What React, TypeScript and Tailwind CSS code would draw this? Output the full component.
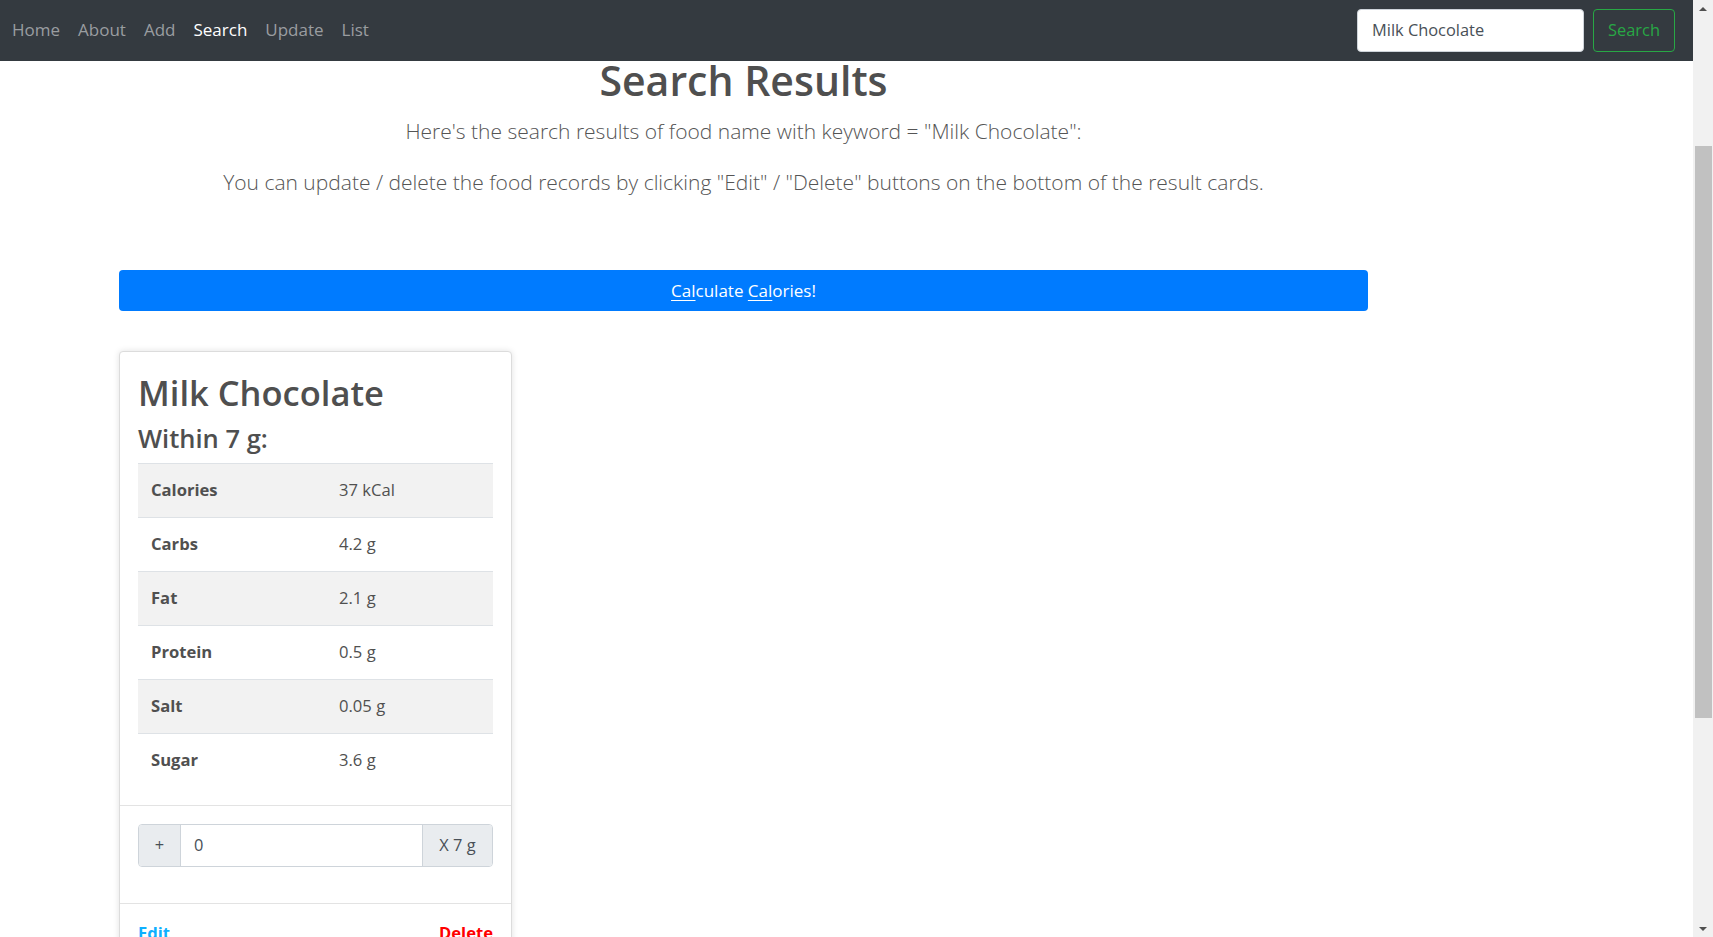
import React from "react";

const rows: { label: string; value: string }[] = [
  { label: "Calories", value: "37 kCal" },
  { label: "Carbs", value: "4.2 g" },
  { label: "Fat", value: "2.1 g" },
  { label: "Protein", value: "0.5 g" },
  { label: "Salt", value: "0.05 g" },
  { label: "Sugar", value: "3.6 g" },
];

export default function App() {
  return (
    <div className="flex h-[937px] w-[1713px] overflow-hidden bg-white font-['Open_Sans','Noto_Sans',sans-serif] text-[#505050]">
      <div className="flex w-[1693px] flex-col">
        {/* Navbar */}
        <nav className="flex h-[61px] shrink-0 items-center justify-between bg-[#343a40] pl-[3px] pr-[18px]">
          <div className="flex items-center pb-[2px] text-[17px]">
            <span className="px-[9px] text-[#9a9da0]">Home</span>
            <span className="px-[9px] text-[#9a9da0]">About</span>
            <span className="px-[9px] text-[#9a9da0]">Add</span>
            <span className="px-[9px] text-white">Search</span>
            <span className="px-[9px] text-[#9a9da0]">Update</span>
            <span className="px-[9px] text-[#9a9da0]">List</span>
          </div>
          <div className="flex items-center gap-[9px]">
            <div className="flex h-[43px] w-[227px] items-center rounded-[4px] border border-[#ced4da] bg-white pl-[14px] text-[16.4px] text-[#495057]">
              Milk Chocolate
            </div>
            <div className="flex h-[43px] w-[82px] items-center justify-center rounded-[4px] border border-[#28a745] text-[16.4px] text-[#28a745]">
              Search
            </div>
          </div>
        </nav>

        {/* Main */}
        <main className="flex flex-col pl-[119px]">
          <div className="flex w-[1249px] flex-col items-center">
            <h1 className="text-[41px] font-semibold leading-[39px] text-[#4f4f4f]">Search Results</h1>
            <p className="mt-[16px] text-[21px] font-light leading-[30px] text-[#555]">
              Here's the search results of food name with keyword = "Milk Chocolate":
            </p>
            <p className="mt-[21px] text-[21px] font-light leading-[30px] text-[#555]">
              You can update / delete the food records by clicking "Edit" / "Delete" buttons on the bottom of the result cards.
            </p>
          </div>

          <div className="mt-[73px] flex h-[41px] w-[1249px] items-center justify-center rounded-[4px] bg-[#007bff] text-[17px] text-white">
            <span>
              <span className="underline underline-offset-[3px]">Cal</span>culate{" "}
              <span className="underline underline-offset-[3px]">Cal</span>ories!
            </span>
          </div>

          {/* Card */}
          <div className="mt-[40px] w-[393px] rounded-[4px] border border-[#dcdcdc] bg-white shadow-[0_0_6px_rgba(0,0,0,0.12)]">
            <div className="px-[18px] pb-[18px] pt-[19px]">
              <h2 className="text-[34.5px] font-semibold leading-[43px] text-[#4f4f4f]">Milk Chocolate</h2>
              <h4 className="mt-[9px] text-[25.5px] font-semibold leading-[31px] text-[#4f4f4f]">Within 7 g:</h4>
              <div className="mt-[9px] flex flex-col">
                {rows.map((r, i) => (
                  <div
                    key={r.label}
                    className={
                      "grid h-[54px] grid-cols-[188px_1fr] items-center border-t border-[#dee2e6] text-[16.6px] " +
                      (i % 2 === 0 ? "bg-[#f2f2f2]" : "bg-white")
                    }
                  >
                    <span className="pl-[13px] font-bold text-[#505050]">{r.label}</span>
                    <span className="pl-[13px] text-[#505050]">{r.value}</span>
                  </div>
                ))}
              </div>
            </div>
            <div className="border-t border-[#e3e3e3] px-[18px] pb-[36px] pt-[18px]">
              <div className="flex h-[43px] overflow-hidden rounded-[4px] border border-[#ced4da] text-[16.4px] text-[#495057]">
                <div className="flex w-[42px] items-center justify-center border-r border-[#ced4da] bg-[#e9ecef]">+</div>
                <div className="flex flex-1 items-center bg-white pl-[13px]">0</div>
                <div className="flex w-[70px] items-center justify-center border-l border-[#ced4da] bg-[#e9ecef]">X 7 g</div>
              </div>
            </div>
            <div className="flex justify-between border-t border-[#e3e3e3] px-[18px] pb-[16px] pt-[16px] text-[16.6px] font-bold leading-[26px]">
              <span className="text-[#0fb0ff]">Edit</span>
              <span className="text-[#ff0000]">Delete</span>
            </div>
          </div>
        </main>
      </div>

      {/* Scrollbar */}
      <div className="flex h-[937px] w-[20px] shrink-0 flex-col bg-[#f1f1f1]">
        <div className="flex h-[17px] items-center justify-center">
          <div className="h-0 w-0 border-b-[4px] border-l-[4px] border-r-[4px] border-b-[#505050] border-l-transparent border-r-transparent" />
        </div>
        <div className="mt-[129px] h-[572px] pl-[2px] pr-[1px]">
          <div className="h-full w-full bg-[#c1c1c1]" />
        </div>
        <div className="flex-1" />
        <div className="flex h-[17px] items-center justify-center">
          <div className="h-0 w-0 border-l-[4px] border-r-[4px] border-t-[4px] border-l-transparent border-r-transparent border-t-[#505050]" />
        </div>
      </div>
    </div>
  );
}
